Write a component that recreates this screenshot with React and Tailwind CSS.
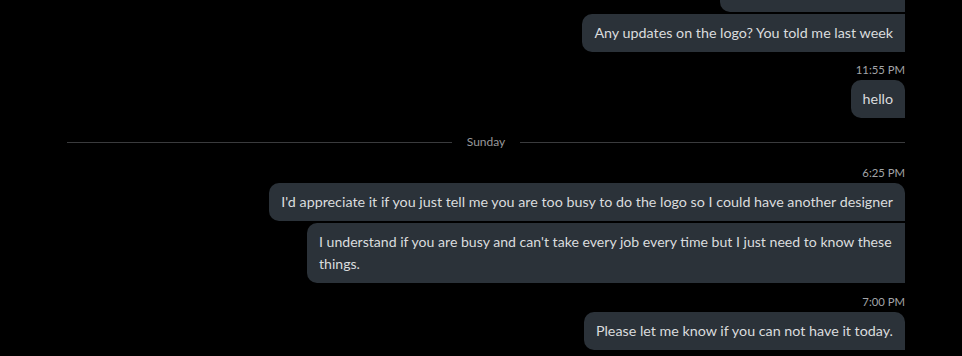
const font = { fontFamily: 'Lato, "Open Sans", sans-serif' };

const Bubble = ({ children, first, className = 'px-3 text-[14.3px]' }) => (
  <div
    className={`bg-[#2b3239] text-[#dadcde] leading-[22px] py-2 rounded-l-[10px] ${first ? 'rounded-tr-[10px]' : ''} ${className}`}
  >
    {children}
  </div>
);

const Time = ({ children, className = '' }) => (
  <div className={`h-4 leading-4 text-[11.3px] text-[#a3a5a8] mb-[2px] ${className}`}>{children}</div>
);

export default function App() {
  return (
    <div className="w-[962px] h-[356px] bg-black overflow-hidden" style={font}>
      <div className="flex flex-col items-end pl-[67px] pr-[57px]">
        <div className="w-[185px] h-[38px] -mt-[26px] bg-[#2b3239] rounded-l-[10px]" />
        <Bubble className="px-3 text-[14.3px] mt-[2px]">Any updates on the logo? You told me last week</Bubble>

        <Time className="mt-[10px]">11:55 PM</Time>
        <Bubble first>hello</Bubble>

        <div className="self-stretch flex items-center mt-4 h-4">
          <div className="flex-1 h-px bg-[#3a3b3d]" />
          <span className="mx-[15px] text-[12px] leading-4 text-[#98999b]">Sunday</span>
          <div className="flex-1 h-px bg-[#3a3b3d]" />
        </div>

        <Time className="mt-[15px]">6:25 PM</Time>
        <Bubble first>
          I'd appreciate it if you just tell me you are too busy to do the logo so I could have another designer
        </Bubble>
        <Bubble className="mt-[2px] w-[598px] px-3 text-[14.1px]">
          I understand if you are busy and can't take every job every time but I just need to know these things.
        </Bubble>

        <Time className="mt-[11px]">7:00 PM</Time>
        <Bubble first>Please let me know if you can not have it today.</Bubble>
      </div>
    </div>
  );
}
